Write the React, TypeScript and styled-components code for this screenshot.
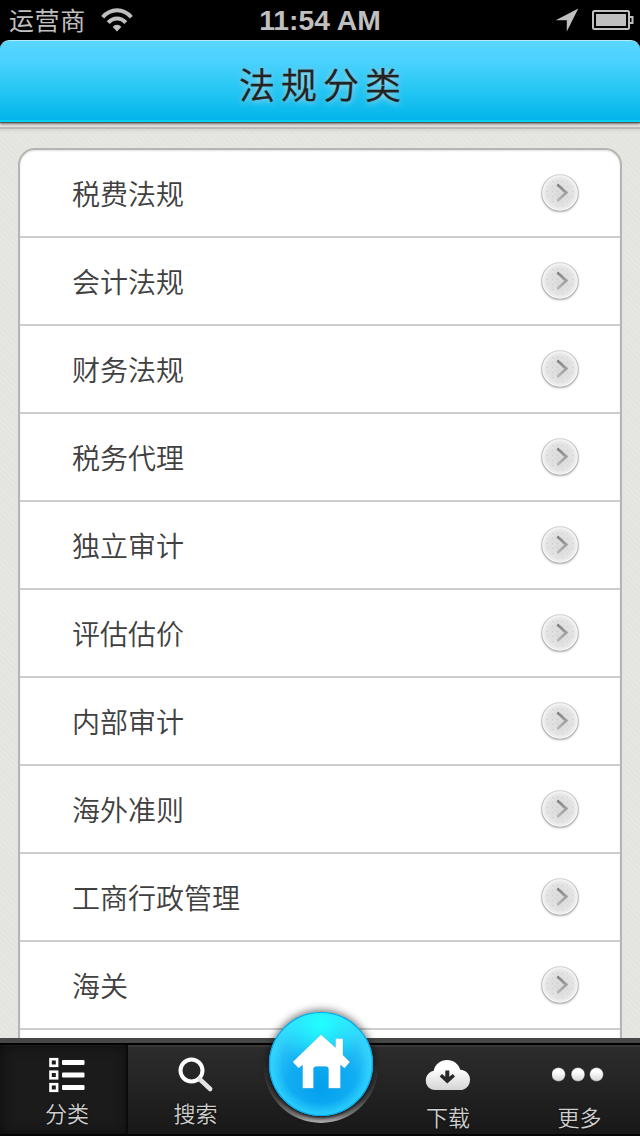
import React from 'react';
import styled, { createGlobalStyle } from 'styled-components';

const GlobalStyle = createGlobalStyle`
  * { box-sizing: border-box; }
  html, body { margin: 0; padding: 0; background: #000; }
  body { font-family: "Noto Sans CJK SC", sans-serif; overflow: hidden; }
`;

const Screen = styled.div`
  width: 640px;
  height: 1136px;
  display: grid;
  grid-template-rows: 40px 82px 916px 98px;
  overflow: hidden;
  background: #000;
`;

const StatusBar = styled.div`
  display: grid;
  grid-template-columns: 1fr auto 1fr;
  align-items: center;
  color: #bfbfbf;
  padding: 0 6px 0 9px;
`;

const Carrier = styled.div`
  display: flex;
  align-items: center;
  gap: 15px;
  font-size: 25px;
  line-height: 36px;
  letter-spacing: 0.6px;
  padding-bottom: 2px;

  svg { position: relative; top: 1px; }
`;

const Clock = styled.div`
  font: bold 28.3px/40px "Liberation Sans", Arial, sans-serif;
  padding-right: 3px;
  white-space: nowrap;
`;

const StatusIcons = styled.div`
  display: flex;
  justify-content: flex-end;
  align-items: center;
  gap: 13px;
`;

const Header = styled.header`
  position: relative;
  z-index: 1;
  display: flex;
  align-items: center;
  justify-content: center;
  border-radius: 9px 9px 0 0;
  background: linear-gradient(#58d6ff 0%, #4bd2fe 25%, #25c6f3 62%, #02b5ea 100%);
  border-top: 1px solid #b5ecfa;
  border-bottom: 2px solid #04d0f4;
  box-shadow: 0 1px 1px #555, 0 2px 3px rgba(0, 0, 0, 0.5);
`;

const Title = styled.h1`
  margin: 0;
  padding: 4px 0 0 6px;
  font-size: 36px;
  line-height: 52px;
  font-weight: 350;
  letter-spacing: 6px;
  color: #222;
  -webkit-text-stroke: 0.3px #222;
  text-shadow: 0 1px 6px rgba(255, 255, 255, 0.75), 0 0 4px rgba(70, 90, 95, 0.4);
`;

const Content = styled.main`
  overflow: hidden;
  padding: 26px 18px 0;
  background:
    linear-gradient(transparent 5px, #b9b9b7 5px, #b9b9b7 7px, #d6d6d3 7px, transparent 11px),
    repeating-linear-gradient(45deg, #e6e6e2 0 2px, #e3e3df 2px 4px);
`;

const List = styled.ul`
  margin: 0;
  padding: 0;
  list-style: none;
  background: #fff;
  border: 2px solid #b5b5b3;
  border-radius: 17px 17px 0 0;
  box-shadow: inset 0 1px 2px rgba(0, 0, 0, 0.12);
`;

const Row = styled.li`
  display: flex;
  align-items: center;
  justify-content: space-between;
  height: 88px;
  padding: 0 41px 0 52px;
  border-bottom: 2px solid #cdcdcd;
`;

const RowLabel = styled.span`
  font-size: 28px;
  line-height: 40px;
  font-weight: 350;
  color: #404040;
`;

const Disclosure = styled.span`
  display: flex;
  align-items: center;
  justify-content: center;
  width: 38px;
  height: 38px;
  border-radius: 50%;
`;

const TabBar = styled.nav`
  position: relative;
  display: grid;
  grid-template-columns: 128px 128px 128px 128px 128px;
  border-top: 5px solid #464848;
  background: #1e1e1e;
`;

const Tab = styled.div<{ $active?: boolean; $low?: boolean; $shift?: number }>`
  display: flex;
  flex-direction: column;
  align-items: center;
  height: 93px;
  padding-left: ${(p) => p.$shift ?? 6}px;
  padding-top: 12px;
  gap: ${(p) => (p.$low ? 5 : 1)}px;
  border-top: 2px solid #000;
  border-bottom: 2px solid #050505;
  background: ${(p) => (p.$active ? '#1b1b1b' : 'linear-gradient(#2d2d2d, #181818)')};
  box-shadow: ${(p) =>
    p.$active ? 'inset -2px 0 1px #0b0b0b, inset 0 0 14px #0c0c0c, inset 0 1px #343434' : 'inset 0 2px #383838'};
`;

const TabLabel = styled.span`
  font-size: 22px;
  line-height: 32px;
  font-weight: 350;
  color: #cecece;
  text-shadow: 0 0 2px #000;
`;

const HomeButton = styled.button`
  position: absolute;
  left: 257px;
  top: -44px;
  width: 128px;
  height: 134px;
  padding: 0;
  border: 0;
  background: none;
`;

const WifiIcon = () => (
  <svg width="32" height="24" viewBox="0 0 32 24" fill="none" stroke="#bfbfbf" strokeWidth="4">
    <path d="M1.7 9.2C9.8 0 22.2 0 30.3 9.2" />
    <path d="M7.2 14.7C12.2 9.2 19.8 9.2 24.8 14.7" />
    <path d="M11.7 19C14 16 18 16 20.3 19L16 23.5Z" fill="#bfbfbf" stroke="none" />
  </svg>
);

const LocationIcon = () => (
  <svg width="24" height="24" viewBox="0 0 24 24">
    <path d="M23.3.5 11.8 23.4V12.3H.7Z" fill="#bfbfbf" />
  </svg>
);

const BatteryIcon = () => (
  <svg width="42" height="20" viewBox="0 0 42 20" fill="none" stroke="#bfbfbf" strokeWidth="2">
    <rect x="1" y="1" width="36" height="18" rx="1.5" />
    <rect x="4" y="4" width="30" height="12" fill="#bfbfbf" stroke="none" />
    <path d="M38 7h2.5v6H38" />
  </svg>
);

const Chevron = () => (
  <svg width="38" height="38" viewBox="0 0 38 38" fill="none" overflow="visible">
    <defs>
      <linearGradient id="chev" x1="0" y1="0" x2="0" y2="1">
        <stop offset="0" stopColor="#808080" />
        <stop offset="1" stopColor="#b8b8b8" />
      </linearGradient>
      <linearGradient id="rim" x1="0" y1="0" x2="0" y2="1">
        <stop offset="0" stopColor="#cfcfcf" />
        <stop offset="1" stopColor="#adadad" />
      </linearGradient>
      <radialGradient id="disc">
        <stop offset="0" stopColor="#dadada" />
        <stop offset="0.75" stopColor="#e2e2e2" />
        <stop offset="1" stopColor="#f0f0f0" />
      </radialGradient>
      <pattern id="dots" width="5" height="5" patternUnits="userSpaceOnUse">
        <rect x="1" y="2" width="1" height="1" fill="#cbcbcb" />
      </pattern>
      <filter id="drop" x="-20%" y="-20%" width="140%" height="140%">
        <feGaussianBlur stdDeviation="1" />
      </filter>
    </defs>
    <circle cx="19" cy="20" r="18.6" fill="#000" opacity="0.18" filter="url(#drop)" />
    <circle cx="19" cy="19" r="18.3" fill="#fafafa" stroke="url(#rim)" strokeWidth="1.1" />
    <circle cx="19" cy="19" r="17" fill="url(#disc)" />
    <circle cx="19" cy="19" r="14" fill="url(#dots)" />
    <path d="M16.3 10.5 25.3 18.7 16.3 27" stroke="url(#chev)" strokeWidth="2.6" />
  </svg>
);

const IconDefs = () => (
  <defs>
    <linearGradient id="white" x1="0" y1="0" x2="0" y2="1">
      <stop offset="0.3" stopColor="#fff" />
      <stop offset="1" stopColor="#d4d4d4" />
    </linearGradient>
  </defs>
);

const ListIcon = () => (
  <svg width="36" height="38" viewBox="0 0 36 38">
    {[1, 13.5, 26].map((y) => (
      <g key={y}>
        <rect x="1.5" y={y + 1.2} width="6.6" height="6.6" fill="none" stroke="#fff" strokeWidth="2.6" />
        <rect x="13" y={y + 2} width="22.5" height="5" rx="1" fill="#fff" />
      </g>
    ))}
  </svg>
);

const SearchIcon = () => (
  <svg width="36" height="38" viewBox="0 0 36 38" fill="none" stroke="#fff">
    <circle cx="13.5" cy="13.5" r="11" strokeWidth="4" />
    <path d="m21.5 22 10.7 10" strokeWidth="4.5" strokeLinecap="round" stroke="#e4e4e4" />
  </svg>
);

const CloudIcon = () => (
  <svg width="46" height="38" viewBox="0 0 46 38">
    <IconDefs />
    <path
      d="M10 33C4.5 33 .8 28.7.8 23.5c0-5 3.3-8.8 7.9-9.8C10 7.3 15.5 3 22 3c6.5 0 11.7 4 13.2 9.7 5.6.3 9.8 4.4 9.8 9.7C45 28.5 41 33 35 33Z"
      fill="url(#white)"
    />
    <path d="M20.3 13.5h4v6.2l3.5-2.6 2.2 2.5-7.7 7-7.6-7 2.3-2.5 3.3 2.6Z" fill="#292929" />
  </svg>
);

const DotsIcon = () => (
  <svg width="56" height="38" viewBox="2 0 56 38">
    {[7.5, 27, 45.5].map((x) => (
      <circle key={x} cx={x + 1} cy="17.5" r="6.9" fill="url(#white)" stroke="#080808" strokeWidth="0.4" />
    ))}
  </svg>
);

const HomeIcon = () => (
  <svg width="128" height="134" viewBox="0 0 128 134">
    <defs>
      <linearGradient id="cup" x1="0" y1="0" x2="0" y2="1">
        <stop offset="0.45" stopColor="#444" stopOpacity="0" />
        <stop offset="0.8" stopColor="#4a4a4a" />
        <stop offset="0.93" stopColor="#777" />
        <stop offset="1" stopColor="#b0b0b0" />
      </linearGradient>
      <linearGradient id="cupInner" x1="0" y1="0" x2="0" y2="1">
        <stop offset="0.5" stopColor="#1e1e1e" stopOpacity="0" />
        <stop offset="0.7" stopColor="#1a1a1a" />
        <stop offset="1" stopColor="#1a1a1a" />
      </linearGradient>
      <radialGradient id="ball" cx="0.5" cy="0.72" r="0.68">
        <stop offset="0" stopColor="#05a0ed" />
        <stop offset="0.5" stopColor="#12aef3" />
        <stop offset="1" stopColor="#3fd5fb" />
      </radialGradient>
      <radialGradient id="shine" cx="0.5" cy="0.12" r="0.42">
        <stop offset="0" stopColor="#20ffff" />
        <stop offset="1" stopColor="#20ffff" stopOpacity="0" />
      </radialGradient>
      <radialGradient id="glow">
        <stop offset="0.75" stopColor="#30d8ff" stopOpacity="0" />
        <stop offset="0.97" stopColor="#30d8ff" stopOpacity="0.75" />
      </radialGradient>
      <filter id="soft" x="-20%" y="-20%" width="140%" height="140%">
        <feGaussianBlur stdDeviation="4" />
      </filter>
      <filter id="softInner" x="-10%" y="-10%" width="120%" height="120%">
        <feGaussianBlur stdDeviation="1.4" />
      </filter>
    </defs>
    <circle cx="64" cy="64" r="52.5" fill="#000" opacity="0.6" filter="url(#soft)" />
    <circle cx="64" cy="66.5" r="57.5" fill="url(#cup)" />
    <ellipse cx="64" cy="63" rx="56" ry="56" fill="url(#cupInner)" filter="url(#softInner)" />
    <circle cx="64" cy="65" r="52" fill="url(#ball)" />
    <circle cx="64" cy="65" r="52" fill="url(#glow)" />
    <circle cx="64" cy="65" r="52" fill="url(#shine)" />
    <circle cx="64" cy="65" r="51.5" fill="none" stroke="#08a4ea" strokeWidth="1.2" />
    <path
      d="M64 35.5 78.5 48.5V39.5h7.5v16.5l7 7-5.5 6.2-4-3.2v23.3H71.5V70.3q0-2.8-2.8-2.8H59.3q-2.8 0-2.8 2.8v19H45.6V66l-4 3.2-5.9-6.2Z"
      fill="#fff"
      stroke="#087fbf"
      strokeOpacity="0.3"
      strokeWidth="0.7"
    />
  </svg>
);

const categories = [
  '税费法规', '会计法规', '财务法规', '税务代理', '独立审计', '评估估价',
  '内部审计', '海外准则', '工商行政管理', '海关', '',
];

export default function App() {
  return (
    <>
      <GlobalStyle />
      <Screen>
        <StatusBar>
          <Carrier>运营商<WifiIcon /></Carrier>
          <Clock>11:54 AM</Clock>
          <StatusIcons><LocationIcon /><BatteryIcon /></StatusIcons>
        </StatusBar>
        <Header><Title>法规分类</Title></Header>
        <Content>
          <List>
            {categories.map((name, i) => (
              <Row key={i}>
                <RowLabel>{name}</RowLabel>
                <Disclosure><Chevron /></Disclosure>
              </Row>
            ))}
          </List>
        </Content>
        <TabBar>
          <Tab $active><ListIcon /><TabLabel>分类</TabLabel></Tab>
          <Tab $shift={7}><SearchIcon /><TabLabel>搜索</TabLabel></Tab>
          <Tab />
          <Tab $low $shift={0}><CloudIcon /><TabLabel>下载</TabLabel></Tab>
          <Tab $low $shift={7}><DotsIcon /><TabLabel>更多</TabLabel></Tab>
          <HomeButton><HomeIcon /></HomeButton>
        </TabBar>
      </Screen>
    </>
  );
}
